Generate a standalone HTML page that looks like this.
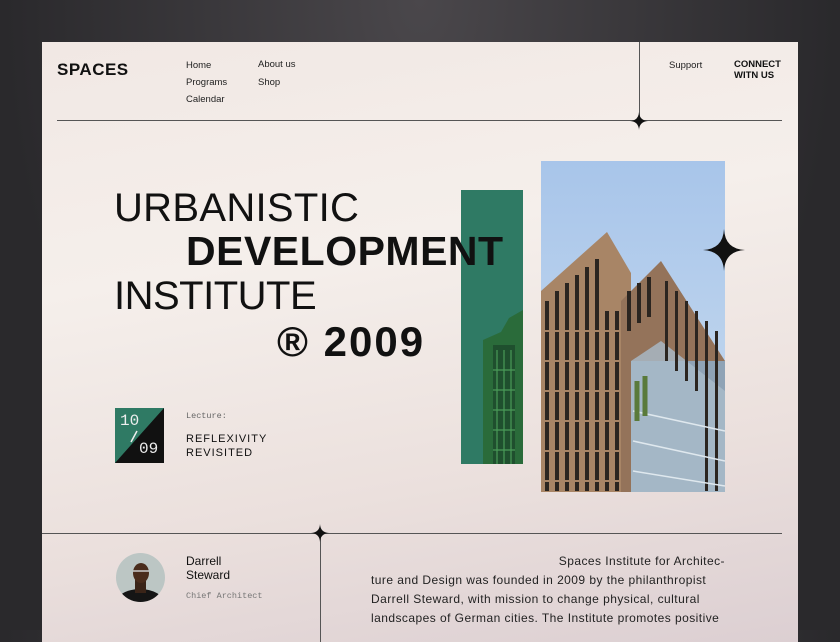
<!DOCTYPE html>
<html><head><meta charset="utf-8"><style>
*{margin:0;padding:0;box-sizing:border-box}
body{width:840px;height:630px;overflow:hidden;background:radial-gradient(ellipse at 50% 0%,#4a474b,#2a292c 70%);font-family:"Liberation Sans",sans-serif;color:#111;position:relative}
.card{position:absolute;left:42px;top:42px;width:756px;height:600px;background:linear-gradient(170deg,#f1e8e4 0%,#f5efeb 35%,#ebe0dd 70%,#dccfd2 100%);overflow:hidden}
.a{position:absolute;white-space:nowrap}
.nav{font-size:9.5px;color:#222}
.line{position:absolute;background:#555}
.h{font-size:40px;letter-spacing:.3px;line-height:1}
</style></head><body>
<div class="card">
<div class="a" style="left:15px;top:18px;font-size:17px;font-weight:900;letter-spacing:.5px">SPACES</div>
<div class="a nav" style="left:144px;top:18px">Home</div>
<div class="a nav" style="left:144px;top:35px">Programs</div>
<div class="a nav" style="left:144px;top:52px">Calendar</div>
<div class="a nav" style="left:216px;top:17px">About us</div>
<div class="a nav" style="left:216px;top:35px">Shop</div>
<div class="a nav" style="left:627px;top:18px">Support</div>
<div class="a" style="left:692px;top:17px;font-size:9.5px;font-weight:bold;line-height:11px">CONNECT<br>WITN US</div>
<div class="line" style="left:15px;top:78px;width:725px;height:1px"></div>
<div class="line" style="left:597px;top:0;width:1px;height:79px"></div>
<div class="line" style="left:0;top:491px;width:740px;height:1px"></div>
<div class="line" style="left:278px;top:491px;width:1px;height:120px"></div>
<svg class="a" style="left:587px;top:69px" width="20" height="20" viewBox="-10 -10 20 20"><path d="M0,-9Q0.5,-0.5 9,0Q0.5,0.5 0,9Q-0.5,0.5 -9,0Q-0.5,-0.5 0,-9Z" fill="#111"/></svg>
<svg class="a" style="left:268px;top:481px" width="20" height="20" viewBox="-10 -10 20 20"><path d="M0,-9Q0.5,-0.5 9,0Q0.5,0.5 0,9Q-0.5,0.5 -9,0Q-0.5,-0.5 0,-9Z" fill="#111"/></svg>
<!-- green panel -->
<svg class="a" style="left:419px;top:148px" width="62" height="274">
<rect width="62" height="274" fill="#2f7a64"/>
<path d="M22,274V150L40,142L48,128L62,120V274Z" fill="#2a6b3a"/>
<rect x="32" y="155" width="22" height="119" fill="#1f4f2e"/>
<g stroke="#4a9a58" stroke-width="1.2"><path d="M36,160V274M43,160V274M50,160V274"/><path d="M32,180H54M32,200H54M32,220H54M32,240H54M32,260H54"/></g>
</svg>
<!-- photo -->
<svg class="a" style="left:499px;top:119px" width="184" height="331">
<defs><linearGradient id="sky" x1="0" y1="0" x2="0" y2="1"><stop offset="0" stop-color="#a8c5ea"/><stop offset="1" stop-color="#c9dcef"/></linearGradient></defs>
<rect width="184" height="331" fill="url(#sky)"/>
<path d="M0,130L66,71L90,112V331H0Z" fill="#a88566"/>
<path d="M80,140L120,100L184,200V331H80Z" fill="#94735a"/>
<path d="M90,200H184V331H90Z" fill="#8fa3b6"/>
<path d="M90,200L120,180L184,230V331H90Z" fill="#a9bccb" opacity=".8"/>
<g fill="#2b2520">
<rect x="4" y="140" width="4" height="190"/><rect x="14" y="130" width="4" height="200"/><rect x="24" y="122" width="4" height="208"/><rect x="34" y="114" width="4" height="216"/><rect x="44" y="106" width="4" height="224"/><rect x="54" y="98" width="4" height="232"/><rect x="64" y="150" width="4" height="180"/><rect x="74" y="150" width="4" height="180"/>
<rect x="86" y="130" width="4" height="40"/><rect x="96" y="122" width="4" height="40"/><rect x="106" y="116" width="4" height="40"/>
<rect x="124" y="120" width="3" height="80"/><rect x="134" y="130" width="3" height="80"/><rect x="144" y="140" width="3" height="80"/><rect x="154" y="150" width="3" height="80"/><rect x="164" y="160" width="3" height="170"/><rect x="174" y="170" width="3" height="160"/>
</g>
<g stroke="#a88566" stroke-width="2"><path d="M0,170H80M0,200H80M0,230H80M0,260H80M0,290H80M0,320H80"/></g>
<g stroke="#dfe8ee" stroke-width="1.5"><path d="M92,250L184,270M92,280L184,300M92,310L184,325"/></g>
<path d="M96,220V260M104,215V255" stroke="#5a7a3a" stroke-width="5"/>
</svg>
<svg class="a" style="left:660px;top:186px" width="44" height="44" viewBox="-22 -22 44 44"><path d="M0,-21Q1,-1 21,0Q1,1 0,21Q-1,1 -21,0Q-1,-1 0,-21Z" fill="#111"/></svg>
<div class="a h" style="left:72px;top:146px">URBANISTIC</div>
<div class="a h" style="left:144px;top:189px;font-weight:900;letter-spacing:.5px;font-size:41px">DEVELOPMENT</div>
<div class="a h" style="left:72px;top:234px;letter-spacing:-0.5px">INSTITUTE</div>
<div class="a h" style="left:235px;top:279px;font-weight:900;letter-spacing:2px;font-size:42px">® 2009</div>
<svg class="a" style="left:73px;top:366px" width="49" height="55"><rect width="49" height="55" fill="#111"/><path d="M0,0H49L0,55Z" fill="#2f7a64"/><path d="M22,23L16,34" stroke="#eee" stroke-width="1.5"/></svg>
<div class="a" style="left:78px;top:370px;font-family:'Liberation Mono',monospace;font-size:16px;color:#eee">10</div>
<div class="a" style="left:97px;top:398px;font-family:'Liberation Mono',monospace;font-size:16px;color:#eee">09</div>
<div class="a" style="left:144px;top:369px;font-size:8.5px;color:#666;font-family:'Liberation Mono',monospace">Lecture:</div>
<div class="a" style="left:144px;top:390px;font-size:11px;letter-spacing:1px;line-height:14px">REFLEXIVITY<br>REVISITED</div>
<svg class="a" style="left:74px;top:511px" width="49" height="49"><clipPath id="c"><circle cx="24.5" cy="24.5" r="24.5"/></clipPath><g clip-path="url(#c)"><rect width="49" height="49" fill="#bcc6c4"/><ellipse cx="24" cy="50" rx="24" ry="14" fill="#151515"/><rect x="19" y="26" width="11" height="14" fill="#3a2418"/><ellipse cx="25" cy="20" rx="8" ry="10" fill="#4a2c1c"/><path d="M17,18H33" stroke="#ccc" stroke-width="1.5"/></g></svg>
<div class="a" style="left:144px;top:512px;font-size:12px;line-height:14px">Darrell<br>Steward</div>
<div class="a" style="left:144px;top:549px;font-size:8.5px;color:#777;font-family:'Liberation Mono',monospace">Chief Architect</div>
<div class="a" style="left:329px;top:510px;width:354px;font-size:12px;line-height:19px;color:#222;letter-spacing:.45px;white-space:normal"><div style="text-align:right">Spaces Institute for Architec-</div>ture and Design was founded in 2009 by the philanthropist Darrell Steward, with mission to change physical, cultural landscapes of German cities. The Institute promotes positive</div>
</div>
</body></html>
